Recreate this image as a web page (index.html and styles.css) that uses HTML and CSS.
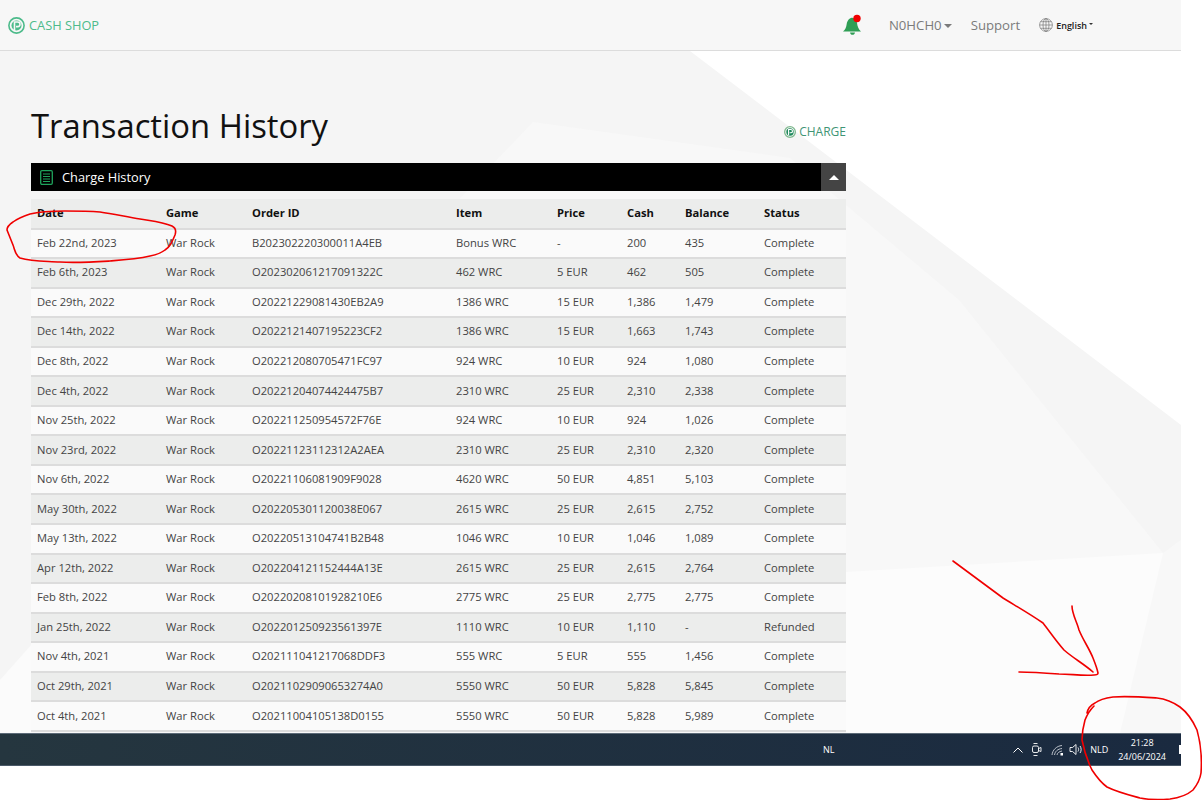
FILE: index.html
```html
<!DOCTYPE html>
<html lang="en">
<head>
<meta charset="UTF-8">
<meta name="viewport" content="width=device-width, initial-scale=1.0">
<title>Transaction History</title>
<link rel="stylesheet" href="styles.css">
</head>
<body>
<div class="page">
  <div class="window">
    <header class="topbar">
      <a class="brand">
        <svg class="coin" width="17" height="17" viewBox="0 0 17 17"><circle cx="8.5" cy="8.5" r="7.6" fill="none" stroke="#4dbb8b" stroke-width="1.6"/><circle cx="8.5" cy="8.5" r="5" fill="#4dbb8b"/><path d="M6.5 13V5h3.2a2.2 2.2 0 0 1 0 4.6H8" fill="none" stroke="#f7f7f7" stroke-width="1.6"/></svg>
        CASH SHOP
      </a>
      <nav class="nav">
        <svg class="bell" width="22" height="22" viewBox="0 0 22 22"><path d="M1 17.5c2.5-2 3.2-4.500 3.700-7.500.5-3.400 2.600-6 5-6.300 3-.3 5 2 5.300 5 .3 3.500 1.500 6.500 4 8.800z" fill="#2f9e55"/><path d="M8 18.500h5c-.3 1.500-1.200 2.300-2.500 2.300S8.300 20 8 18.500z" fill="#2f9e55"/><circle cx="15" cy="4.500" r="3.700" fill="#f00000"/></svg>
        <a class="nav-link user">N0HCH0<span class="caret"></span></a>
        <a class="nav-link">Support</a>
        <a class="lang">
          <svg width="14" height="14" viewBox="0 0 14 14" fill="none" stroke="#777" stroke-width=".7"><circle cx="7" cy="7" r="6.400"/><ellipse cx="7" cy="7" rx="3" ry="6.400"/><path d="M7 .6v12.800M.6 7h12.800M1.500 3.700h11M1.500 10.300h11"/></svg>
          English<span class="caret small"></span>
        </a>
      </nav>
    </header>

    <main class="content">
      <svg class="backdrop" viewBox="0 51 1181 682" preserveAspectRatio="none">
        <polygon points="690,51 1181,51 1181,425" fill="#fff"/>
        <polygon points="533,122 0,680 0,733 1181,733 1181,540 1163,553 959,300 790,158" fill="#f8f8f8"/>
        <polygon points="846,572 1163,553 1120,733 846,733" fill="#fcfcfc"/>
        <polygon points="0,680 31,645 31,733 0,733" fill="#fbfbfb"/>
      </svg>
      <div class="title-row">
        <h1>Transaction History</h1>
        <a class="charge">
          <svg width="12" height="12" viewBox="0 0 17 17"><circle cx="8.500" cy="8.500" r="7.600" fill="none" stroke="#7fb98f" stroke-width="1.800"/><circle cx="8.500" cy="8.500" r="5.200" fill="#1f8a5d"/><path d="M6.500 13V5h3.200a2.200 2.200 0 0 1 0 4.600H8" fill="none" stroke="#fff" stroke-width="1.600"/></svg>
          CHARGE
        </a>
      </div>
      <div class="panel-bar">
        <svg class="doc" width="13" height="15" viewBox="0 0 13 15" fill="none" stroke="#1fa35c"><rect x=".7" y=".7" width="11.600" height="13.600" rx="1.200" stroke-width="1.300"/><path d="M3 4h7M3 6.500h7M3 9h7M3 11.500h7" stroke-width="1.200"/></svg>
        <span>Charge History</span>
        <button class="collapse"><span class="caret up"></span></button>
      </div>
      <table class="history">
        <colgroup><col class="c-date"><col class="c-game"><col class="c-order"><col class="c-item"><col class="c-price"><col class="c-cash"><col class="c-balance"><col></colgroup>
        <thead>
          <tr><th>Date</th><th>Game</th><th>Order ID</th><th>Item</th><th>Price</th><th>Cash</th><th>Balance</th><th>Status</th></tr>
        </thead>
        <tbody>
          <tr><td>Feb 22nd, 2023</td><td>War Rock</td><td>B202302220300011A4EB</td><td>Bonus WRC</td><td>-</td><td>200</td><td>435</td><td>Complete</td></tr>
          <tr><td>Feb 6th, 2023</td><td>War Rock</td><td>O202302061217091322C</td><td>462 WRC</td><td>5 EUR</td><td>462</td><td>505</td><td>Complete</td></tr>
          <tr><td>Dec 29th, 2022</td><td>War Rock</td><td>O20221229081430EB2A9</td><td>1386 WRC</td><td>15 EUR</td><td>1,386</td><td>1,479</td><td>Complete</td></tr>
          <tr><td>Dec 14th, 2022</td><td>War Rock</td><td>O2022121407195223CF2</td><td>1386 WRC</td><td>15 EUR</td><td>1,663</td><td>1,743</td><td>Complete</td></tr>
          <tr><td>Dec 8th, 2022</td><td>War Rock</td><td>O202212080705471FC97</td><td>924 WRC</td><td>10 EUR</td><td>924</td><td>1,080</td><td>Complete</td></tr>
          <tr><td>Dec 4th, 2022</td><td>War Rock</td><td>O20221204074424475B7</td><td>2310 WRC</td><td>25 EUR</td><td>2,310</td><td>2,338</td><td>Complete</td></tr>
          <tr><td>Nov 25th, 2022</td><td>War Rock</td><td>O202211250954572F76E</td><td>924 WRC</td><td>10 EUR</td><td>924</td><td>1,026</td><td>Complete</td></tr>
          <tr><td>Nov 23rd, 2022</td><td>War Rock</td><td>O20221123112312A2AEA</td><td>2310 WRC</td><td>25 EUR</td><td>2,310</td><td>2,320</td><td>Complete</td></tr>
          <tr><td>Nov 6th, 2022</td><td>War Rock</td><td>O20221106081909F9028</td><td>4620 WRC</td><td>50 EUR</td><td>4,851</td><td>5,103</td><td>Complete</td></tr>
          <tr><td>May 30th, 2022</td><td>War Rock</td><td>O202205301120038E067</td><td>2615 WRC</td><td>25 EUR</td><td>2,615</td><td>2,752</td><td>Complete</td></tr>
          <tr><td>May 13th, 2022</td><td>War Rock</td><td>O20220513104741B2B48</td><td>1046 WRC</td><td>10 EUR</td><td>1,046</td><td>1,089</td><td>Complete</td></tr>
          <tr><td>Apr 12th, 2022</td><td>War Rock</td><td>O202204121152444A13E</td><td>2615 WRC</td><td>25 EUR</td><td>2,615</td><td>2,764</td><td>Complete</td></tr>
          <tr><td>Feb 8th, 2022</td><td>War Rock</td><td>O20220208101928210E6</td><td>2775 WRC</td><td>25 EUR</td><td>2,775</td><td>2,775</td><td>Complete</td></tr>
          <tr><td>Jan 25th, 2022</td><td>War Rock</td><td>O202201250923561397E</td><td>1110 WRC</td><td>10 EUR</td><td>1,110</td><td>-</td><td>Refunded</td></tr>
          <tr><td>Nov 4th, 2021</td><td>War Rock</td><td>O202111041217068DDF3</td><td>555 WRC</td><td>5 EUR</td><td>555</td><td>1,456</td><td>Complete</td></tr>
          <tr><td>Oct 29th, 2021</td><td>War Rock</td><td>O20211029090653274A0</td><td>5550 WRC</td><td>50 EUR</td><td>5,828</td><td>5,845</td><td>Complete</td></tr>
          <tr><td>Oct 4th, 2021</td><td>War Rock</td><td>O20211004105138D0155</td><td>5550 WRC</td><td>50 EUR</td><td>5,828</td><td>5,989</td><td>Complete</td></tr>
        </tbody>
      </table>
    </main>

    <footer class="taskbar">
      <span class="tb-lang">NL</span>
      <div class="tray">
        <svg width="12" height="8" viewBox="0 0 12 8" fill="none" stroke="#fff" stroke-width="1"><path d="M1.500 6.500L6 2l4.500 4.500"/></svg>
        <svg class="tray-cam" width="11" height="15" viewBox="0 0 11 15" fill="none" stroke="#fff" stroke-width=".9"><rect x="1.500" y="4" width="6" height="6.500" rx="1.500"/><path d="M7.500 6.500l2.500-1v4l-2.500-1M2.500 1.500h4M2.500 13.500h4"/></svg>
        <svg class="tray-wifi" width="13" height="12" viewBox="0 0 13 12" fill="none" stroke="#dfe3e8" stroke-width=".8"><path d="M1 11C1.500 6 5.500 2 11 1.500M3.500 11c.5-3.500 3-6 7.500-6.500M6 11c.3-2 2-3.500 5-4"/><rect x="9.500" y="9" width="2.500" height="2.500" fill="#fff" stroke="none"/></svg>
        <svg width="14" height="13" viewBox="0 0 14 13" fill="none" stroke="#fff" stroke-width=".9"><path d="M1 4.500h2.500L7 1.500v10l-3.500-3H1zM9 4.500c.8 1.200.8 2.800 0 4M11 3c1.500 2 1.500 5 0 7"/></svg>
        <span class="tb-nld">NLD</span>
        <div class="clock"><span>21:28</span><span>24/06/2024</span></div>
        <span class="show-desktop"></span>
      </div>
    </footer>
  </div>

  <svg class="scribbles" viewBox="0 0 1202 800" fill="none" stroke="#f00000" stroke-width="1.600" stroke-linecap="round" stroke-linejoin="round">
    <path d="M7 230C7 226 10 224 13 222C18 218 24 216 30 214C42 211 54 211 65 211C77 211 88 211 100 212C114 214 127 217 140 219C151 221 162 222 172 226C176 228 176 232 175 235C172 242 170 247 165 250C160 254 155 255 150 256C137 259 123 260 110 261C93 262 77 263 60 262C46 261 33 262 20 258C15 255 15 250 13 245C11 240 9 235 7 230"/>
    <path d="M953 561L1003 598C1016 606 1030 614 1043 623C1050 632 1056 641 1064 650C1073 658 1084 664 1093 672"/>
    <path d="M1072 606C1072 614 1077 622 1079 630C1083 640 1089 648 1093 658C1095 663 1097 668 1098 673C1098 675 1096 675 1094 675C1082 676 1071 674 1059 674C1046 673 1032 672 1019 672"/>
    <path d="M1087 713C1088 708 1091 705 1095 703C1100 699 1106 698 1113 697C1128 696 1142 697 1157 698C1166 699 1173 702 1180 707C1188 713 1193 721 1197 730C1201 744 1202 759 1201 773C1200 780 1197 785 1193 790C1186 796 1178 798 1170 799C1160 800 1150 800 1140 798C1129 795 1117 792 1107 787C1100 782 1096 776 1092 770C1087 760 1084 750 1082 740C1082 733 1083 727 1085 720C1087 715 1090 710 1094 706"/>
  </svg>
</div>
</body>
</html>
```

FILE: styles.css
```css
* {
  box-sizing: border-box;
}

body {
  margin: 0;
  background-color: #fff;
  font-family: "Open Sans", Arial, sans-serif;
}

.page {
  position: relative;
  width: 1202px;
  height: 800px;
  overflow: hidden;
}

.window {
  display: flex;
  flex-direction: column;
  width: 1181px;
  height: 766px;
}

.topbar {
  display: flex;
  justify-content: space-between;
  align-items: center;
  flex: none;
  height: 51px;
  padding: 0 88px 0 8px;
  background-color: #f7f7f7;
  border-bottom: 1px solid #dcdcdc;
}

.brand {
  display: flex;
  align-items: center;
  gap: 4px;
  color: #4dbb8b;
  font-size: 12.8px;
}

.nav {
  display: flex;
  align-items: center;
}

.bell {
  margin-right: 25px;
}

.nav-link {
  color: #7b7b7b;
  font-size: 13.2px;
}

.user {
  margin-right: 19px;
}

.lang {
  display: flex;
  align-items: center;
  gap: 3px;
  margin-left: 19px;
  color: #222;
  font-size: 9px;
  font-weight: 600;
}

.caret {
  display: inline-block;
  margin-left: 2px;
  vertical-align: 2px;
  border-top: 4px solid #7b7b7b;
  border-left: 4px solid transparent;
  border-right: 4px solid transparent;
}

.caret.small {
  margin-left: -1px;
  margin-bottom: 3px;
  border-top: 2px solid #333;
  border-left-width: 2px;
  border-right-width: 2px;
}

.caret.up {
  margin: 0;
  border-top: 0;
  border-bottom: 5px solid #fff;
  border-left-width: 5px;
  border-right-width: 5px;
}

.content {
  position: relative;
  flex: 1;
  min-height: 0;
  overflow: hidden;
  padding: 51px 335px 0 31px;
  background-color: #f5f5f5;
}

.backdrop {
  position: absolute;
  top: 0;
  left: 0;
  width: 100%;
  height: 100%;
}

.title-row,
.panel-bar,
.history {
  position: relative;
}

.title-row {
  display: flex;
  justify-content: space-between;
  align-items: flex-end;
  height: 61px;
}

h1 {
  margin: 0 0 13px;
  color: #111;
  font-size: 32.8px;
  font-weight: 400;
  line-height: 48px;
}

.charge {
  display: flex;
  align-items: center;
  gap: 3px;
  margin-bottom: 23px;
  color: #3f9575;
  font-size: 12px;
}

.panel-bar {
  display: flex;
  align-items: center;
  height: 28px;
  padding-left: 9px;
  margin-bottom: 8px;
  background-color: #000;
  color: #fff;
  font-size: 12.8px;
}

.doc {
  margin-right: 9px;
}

.collapse {
  display: flex;
  justify-content: center;
  align-items: center;
  width: 25px;
  height: 28px;
  margin-left: auto;
  padding: 0;
  border: 0;
  background-color: #444;
}

.history {
  width: 100%;
  table-layout: fixed;
  border-collapse: collapse;
  font-size: 11.2px;
}

.c-date { width: 129px; }
.c-game { width: 86px; }
.c-order { width: 204px; }
.c-item { width: 101px; }
.c-price { width: 70px; }
.c-cash { width: 58px; }
.c-balance { width: 79px; }

.history th,
.history td {
  height: 29.56px;
  padding: 0 6px 2px;
  text-align: left;
  white-space: nowrap;
  border-bottom: 2px solid #dcdcdc;
}

.history th {
  color: #111;
  font-weight: 700;
  background-color: #ecedec;
}

.history td {
  color: #444;
  background-color: #fafafa;
}

.history tbody tr:nth-child(even) td {
  background-color: #ecedec;
}

.taskbar {
  display: flex;
  align-items: center;
  flex: none;
  height: 33px;
  padding-left: 823px;
  border-top: 1px solid #5d6b78;
  border-bottom: 1px solid #4a5968;
  background: linear-gradient(to right, #25363f, #1a2a40);
  color: #fff;
  font-size: 9px;
}

.tray {
  display: flex;
  align-items: center;
  margin-left: auto;
}

.tray svg {
  margin-right: 7px;
}

.tray .tray-cam {
  margin-right: 9px;
}

.tray .tray-wifi {
  margin-right: 5px;
}

.clock {
  display: flex;
  flex-direction: column;
  align-items: center;
  margin-left: 10px;
  line-height: 14px;
}

.show-desktop {
  width: 2px;
  height: 9px;
  margin-left: 13px;
  background-color: #fff;
}

.scribbles {
  position: absolute;
  top: 0;
  left: 0;
  width: 1202px;
  height: 800px;
  pointer-events: none;
}
```
